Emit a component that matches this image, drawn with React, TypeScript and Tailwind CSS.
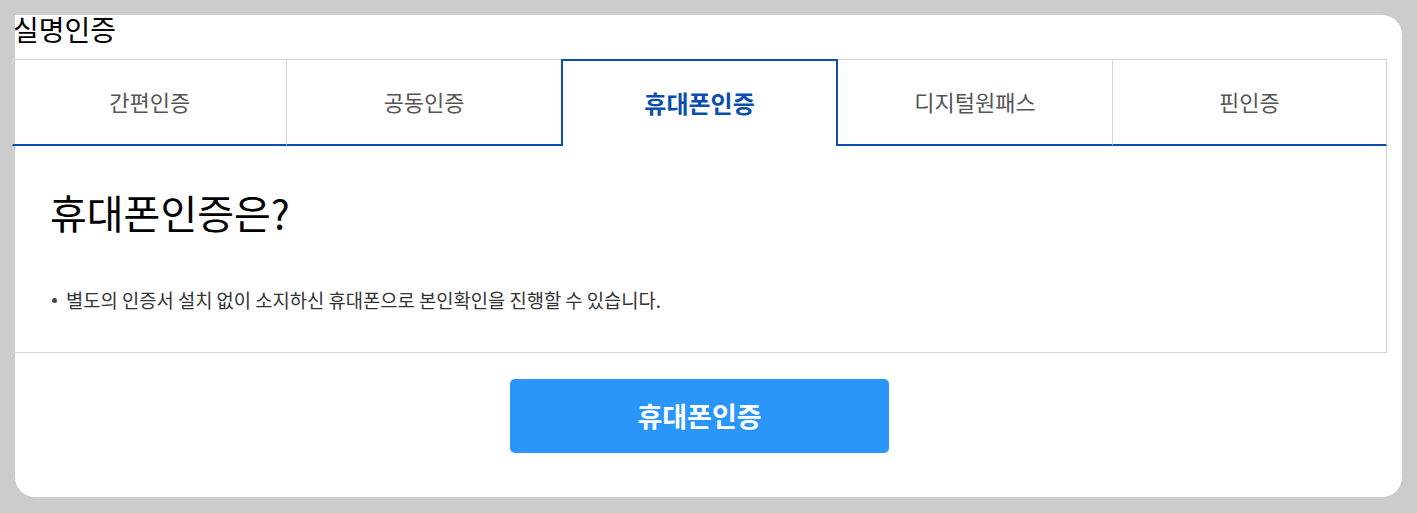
const tabs = ['간편인증', '공동인증', '휴대폰인증', '디지털원패스', '핀인증']
const active = 2

export default function App() {
  return (
    <div
      className="w-[1417px] h-[513px] bg-[#cccccc] pt-[15px] pl-[15px] overflow-hidden"
      style={{ fontFamily: '"Noto Sans CJK KR", "Noto Sans", sans-serif' }}
    >
      <div className="w-[1387px] h-[482px] bg-white rounded-[20px] rounded-tl-none">
        <div className="ml-[-3px] w-[1375px]">
          <h1 className="h-[44px] text-[28px] leading-[28px] text-black font-normal pl-[1px]">실명인증</h1>
          <div className="flex h-[87px]">
            {tabs.map((t, i) =>
              i === active ? (
                <div
                  key={t}
                  className="flex-1 flex items-center justify-center border-2 border-b-0 border-[#0b4fae] text-[24px] font-bold text-[#0b4fae] pb-[2px]"
                >
                  {t}
                </div>
              ) : (
                <div
                  key={t}
                  className={`flex-1 flex items-center justify-center border-t border-[#d5d5d5] border-b-2 border-b-[#0b4fae] text-[22px] text-[#555555] pb-[2px] ${
                    i === 0 ? 'border-l' : ''
                  } ${i === tabs.length - 1 ? 'border-r' : ''} ${i !== active - 1 && i !== tabs.length - 1 ? 'border-r' : ''}`}
                >
                  {t}
                </div>
              ),
            )}
          </div>
          <div className="h-[207px] border border-t-0 border-[#d5d5d5] pl-[37px] pt-[41px]">
            <h2 className="text-[40px] leading-[50px] text-black font-normal">휴대폰인증은?</h2>
            <p className="mt-[51px] text-[18.75px] leading-[24px] text-[#333333] flex items-center">
              <span className="inline-block w-[5px] h-[5px] rounded-full bg-[#444] mr-[9px] ml-[2px]" />
              별도의 인증서 설치 없이 소지하신 휴대폰으로 본인확인을 진행할 수 있습니다.
            </p>
          </div>
          <div className="flex justify-center pt-[26px]">
            <button className="w-[379px] h-[74px] bg-[#2b96f9] rounded-[5px] text-white text-[27px] font-bold">
              휴대폰인증
            </button>
          </div>
        </div>
      </div>
    </div>
  )
}
